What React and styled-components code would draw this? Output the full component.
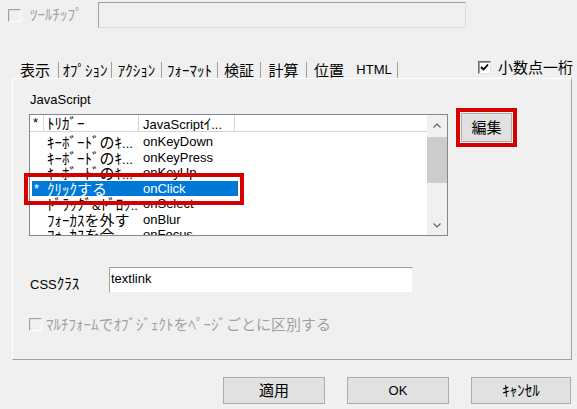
import React from "react";
import styled, { createGlobalStyle } from "styled-components";

const Global = createGlobalStyle`
  html, body { margin: 0; padding: 0; background: #f0f0f0; }
  body {
    font-family: "Liberation Sans", Arial, sans-serif;
    font-size: 13px;
    color: #000;
  }
  * { box-sizing: border-box; }
`;

const JP_RE = /([\u3000-\u30ff\u4e00-\u9fff\uff00-\uffef]+)/;

const Jp = styled.span`
  font-family: "Noto Sans CJK JP", "Noto Sans CJK SC", sans-serif;
  font-size: 15px;
`;

function Txt({ children }) {
  const parts = String(children).split(JP_RE);
  return parts.map((p, i) =>
    p === "" ? null : i % 2 === 1 ? <Jp key={i}>{p}</Jp> : <React.Fragment key={i}>{p}</React.Fragment>
  );
}

const Window = styled.div`
  width: 577px;
  height: 409px;
  overflow: hidden;
  background: #f0f0f0;
  display: flex;
  flex-direction: column;
`;

const TopRow = styled.div`
  display: flex;
  align-items: center;
  height: 26px;
  margin-top: 2px;
  padding-left: 8px;
`;

const Box = styled.span`
  width: 13px;
  height: 13px;
  flex: none;
  display: inline-flex;
  align-items: center;
  justify-content: center;
  border: 1px solid;
  border-color: ${(p) => (p.$disabled ? "#a0a0a0 #ffffff #ffffff #a0a0a0" : "#6d6d6d #e3e3e3 #e3e3e3 #6d6d6d")};
  background: ${(p) => (p.$disabled ? "#f0f0f0" : "#ffffff")};
  box-shadow: ${(p) => (p.$disabled ? "inset 1px 1px 0 #e3e3e3" : "inset 1px 1px 0 #a0a0a0")};
`;

function CheckBox({ checked, disabled }) {
  return (
    <Box $disabled={disabled}>
      {checked && (
        <svg width="9" height="8" viewBox="0 0 9 8">
          <path d="M1 4 L3.5 6.5 L8 1.5" fill="none" stroke="#000" strokeWidth="1.8" />
        </svg>
      )}
    </Box>
  );
}

const DisabledLabel = styled.span`
  color: #a0a0a0;
  line-height: 16px;
  width: ${(p) => p.$w || "auto"};
  margin-left: ${(p) => p.$ml || "0px"};
  white-space: nowrap;
`;

const DisabledField = styled.div`
  width: 368px;
  height: 26px;
  border: 1px solid;
  border-color: #a0a0a0 #dcdcdc #dcdcdc #a0a0a0;
  background: #f0f0f0;
`;

const TabBar = styled.div`
  display: flex;
  height: 16px;
  margin-top: 34px;
  padding-left: 12px;
`;

const Tab = styled.div`
  width: ${(p) => p.$w}px;
  height: 16px;
  line-height: 16px;
  text-align: center;
  white-space: nowrap;
  border-right: ${(p) => (p.$sep ? "1px solid #a0a0a0" : "none")};
`;

const DecimalCheck = styled.label`
  margin-left: auto;
  margin-right: 4px;
  margin-top: -3px;
  height: 16px;
  display: flex;
  align-items: center;
  gap: 7px;
  line-height: 16px;
  white-space: nowrap;
`;

const Panel = styled.div`
  margin-left: 12px;
  width: 560px;
  height: 282px;
  border: 1px solid;
  border-color: #ffffff #a0a0a0 #a0a0a0 #ffffff;
  padding: 13px 0 0 16px;
  display: flex;
  flex-direction: column;
`;

const SectionLabel = styled.div`
  line-height: 16px;
  padding-left: 1px;
`;

const ListRow = styled.div`
  display: flex;
  align-items: flex-start;
  margin-top: 6px;
`;

const ListBox = styled.div`
  position: relative;
  width: 419px;
  height: 122px;
  border: 1px solid #828790;
  background: #fff;
  display: flex;
`;

const ListContent = styled.div`
  flex: 1;
  overflow: hidden;
  display: flex;
  flex-direction: column;
`;

const Header = styled.div`
  display: flex;
  height: 17px;
  border-bottom: 1px solid #d5d5d5;
  background: #fff;
  flex: none;
`;

const HeadCell = styled.div`
  width: ${(p) => p.$w}px;
  padding-left: ${(p) => p.$pl}px;
  border-right: 1px solid #d5d5d5;
  line-height: 16px;
  white-space: nowrap;
  overflow: hidden;
`;

const Rows = styled.div`
  margin-top: 2px;
  margin-left: 2px;
`;

const Row = styled.div`
  display: flex;
  width: 206px;
  height: 15.5px;
  line-height: 15.5px;
  background: ${(p) => (p.$sel ? "#0078d7" : "transparent")};
  color: ${(p) => (p.$sel ? "#fff" : "#000")};
  white-space: nowrap;
`;

const Cell = styled.div`
  width: ${(p) => p.$w}px;
  padding-left: ${(p) => p.$pl}px;
  overflow: hidden;
  flex: none;
`;

const ScrollBar = styled.div`
  width: 20px;
  background: #f0f0f0;
  display: flex;
  flex-direction: column;
  flex: none;
`;

const ArrowBtn = styled.div`
  height: 20px;
  display: flex;
  align-items: center;
  justify-content: center;
  flex: none;
`;

const Track = styled.div`
  flex: 1;
`;

const Thumb = styled.div`
  margin-top: 2px;
  height: 46px;
  background: #cdcdcd;
`;

const Highlight = styled.div`
  position: absolute;
  left: -6px;
  top: 58px;
  width: 220px;
  height: 32px;
  border: 4px solid #d40000;
  pointer-events: none;
`;

const Button = styled.button`
  width: ${(p) => p.$w}px;
  height: ${(p) => p.$h}px;
  background: #e1e1e1;
  border: 1px solid #adadad;
  padding: 0;
  font-family: "Liberation Sans", Arial, sans-serif;
  font-size: 13px;
  color: #000;
  line-height: 16px;
  flex: none;
`;

const EditButton = styled(Button)`
  margin-left: 13px;
  margin-top: -1px;
  outline: 4px solid #d40000;
  outline-offset: 1px;
`;

const CssRow = styled.div`
  display: flex;
  align-items: flex-start;
  margin-top: 31px;
`;

const CssLabel = styled.div`
  width: 80px;
  padding-left: 1px;
  margin-top: 8px;
  line-height: 16px;
`;

const TextField = styled.div`
  width: 304px;
  height: 26px;
  border: 1px solid;
  border-color: #a0a0a0 #f0f0f0 #f0f0f0 #a0a0a0;
  background: #fff;
  padding: 3px 0 0 1px;
  line-height: 16px;
`;

const MultiRow = styled.div`
  display: flex;
  align-items: center;
  gap: 4px;
  height: 13px;
  margin-top: 25px;
`;

const ButtonRow = styled.div`
  display: flex;
  justify-content: flex-end;
  gap: 22px;
  margin-top: 17px;
  padding-right: 6px;
`;

function Chevron({ up }) {
  return (
    <svg width="8" height="5" viewBox="0 0 8 5">
      <polyline
        points={up ? "0.5,4.5 4,1 7.5,4.5" : "0.5,0.5 4,4 7.5,0.5"}
        fill="none"
        stroke="#606060"
        strokeWidth="1.2"
      />
    </svg>
  );
}

const tabs = [
  { t: "表示", w: 47, sep: true },
  { t: "ｵﾌﾟｼｮﾝ", w: 53, sep: true },
  { t: "ｱｸｼｮﾝ", w: 50, sep: true },
  { t: "ﾌｫｰﾏｯﾄ", w: 56, sep: true },
  { t: "検証", w: 43, sep: true },
  { t: "計算", w: 46, sep: true },
  { t: "位置", w: 44, sep: false },
  { t: "HTML", w: 47, sep: true },
];

const rows = [
  { s: "", a: "ｷｰﾎﾞｰﾄﾞのｷ...", b: "onKeyDown" },
  { s: "", a: "ｷｰﾎﾞｰﾄﾞのｷ...", b: "onKeyPress" },
  { s: "", a: "ｷｰﾎﾞｰﾄﾞのｷ...", b: "onKeyUp" },
  { s: "*", a: "ｸﾘｯｸする", b: "onClick", sel: true },
  { s: "", a: "ﾄﾞﾗｯｸﾞ&ﾄﾞﾛｯ...", b: "onSelect" },
  { s: "", a: "ﾌｫｰｶｽを外す", b: "onBlur" },
  { s: "", a: "ﾌｫｰｶｽを合...", b: "onFocus" },
];

export default function App() {
  return (
    <>
      <Global />
      <Window>
        <TopRow>
          <CheckBox disabled />
          <DisabledLabel $ml="9px" $w="68px">
            <Txt>ﾂｰﾙﾁｯﾌﾟ</Txt>
          </DisabledLabel>
          <DisabledField />
        </TopRow>

        <TabBar>
          {tabs.map((t) => (
            <Tab key={t.t} $w={t.w} $sep={t.sep}>
              <Txt>{t.t}</Txt>
            </Tab>
          ))}
          <DecimalCheck>
            <CheckBox checked />
            <Txt>小数点一桁</Txt>
          </DecimalCheck>
        </TabBar>

        <Panel>
          <SectionLabel>JavaScript</SectionLabel>
          <ListRow>
            <ListBox>
              <ListContent>
                <Header>
                  <HeadCell $w={14} $pl={3}>*</HeadCell>
                  <HeadCell $w={95} $pl={3}>
                    <Txt>ﾄﾘｶﾞｰ</Txt>
                  </HeadCell>
                  <HeadCell $w={96} $pl={4}>
                    <Txt>JavaScriptｲ...</Txt>
                  </HeadCell>
                </Header>
                <Rows>
                  {rows.map((r, i) => (
                    <Row key={i} $sel={r.sel}>
                      <Cell $w={11} $pl={2}>{r.s}</Cell>
                      <Cell $w={95} $pl={4}>
                        <Txt>{r.a}</Txt>
                      </Cell>
                      <Cell $w={100} $pl={5}>{r.b}</Cell>
                    </Row>
                  ))}
                </Rows>
              </ListContent>
              <ScrollBar>
                <ArrowBtn>
                  <Chevron up />
                </ArrowBtn>
                <Track>
                  <Thumb />
                </Track>
                <ArrowBtn>
                  <Chevron />
                </ArrowBtn>
              </ScrollBar>
              <Highlight />
            </ListBox>
            <EditButton $w={51} $h={29}>
              <Txt>編集</Txt>
            </EditButton>
          </ListRow>

          <CssRow>
            <CssLabel>
              <Txt>CSSｸﾗｽ</Txt>
            </CssLabel>
            <TextField>textlink</TextField>
          </CssRow>

          <MultiRow>
            <CheckBox disabled />
            <DisabledLabel>
              <Txt>ﾏﾙﾁﾌｫｰﾑでｵﾌﾞｼﾞｪｸﾄをﾍﾟｰｼﾞごとに区別する</Txt>
            </DisabledLabel>
          </MultiRow>
        </Panel>

        <ButtonRow>
          <Button $w={102} $h={27}>
            <Txt>適用</Txt>
          </Button>
          <Button $w={102} $h={27}>OK</Button>
          <Button $w={100} $h={27}>
            <Txt>ｷｬﾝｾﾙ</Txt>
          </Button>
        </ButtonRow>
      </Window>
    </>
  );
}
